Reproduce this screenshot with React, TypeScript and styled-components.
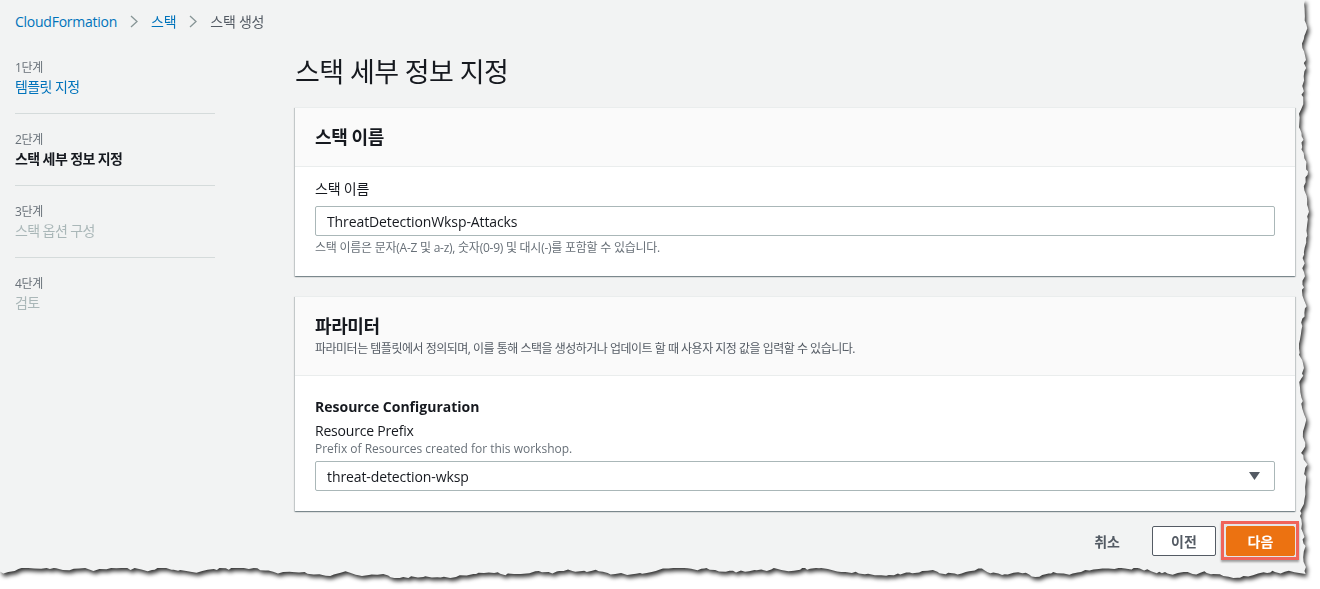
import React from 'react';
import styled, { createGlobalStyle } from 'styled-components';

const GlobalStyle = createGlobalStyle`
  html, body {
    margin: 0;
    padding: 0;
    background: #ffffff;
    overflow: hidden;
  }
  body {
    font-family: "Open Sans", "Noto Sans CJK KR", sans-serif;
    color: #16191f;
  }
`;

// small seeded random so the torn edge looks the same every render
const mulberry32 = (seed: number) => () => {
  seed |= 0;
  seed = (seed + 0x6d2b79f5) | 0;
  let t = Math.imul(seed ^ (seed >>> 15), 1 | seed);
  t = (t + Math.imul(t ^ (t >>> 7), 61 | t)) ^ t;
  return ((t ^ (t >>> 14)) >>> 0) / 4294967296;
};

const tornEdge = () => {
  const rand = mulberry32(11);
  const pts: string[] = ['0px 0px', '1305px 0px'];
  let y = 0;
  let x = 1304;
  while (y < 572) {
    y += 2 + rand() * 4;
    x += (rand() - 0.5) * 5;
    x = Math.max(1299, Math.min(1309, x));
    pts.push(`${x.toFixed(1)}px ${Math.min(y, 574).toFixed(1)}px`);
  }
  let bx = 1300;
  let by = 574;
  while (bx > 0) {
    bx -= 2 + rand() * 5;
    by += (rand() - 0.5) * 4;
    by = Math.max(568, Math.min(578, by));
    pts.push(`${Math.max(bx, 0).toFixed(1)}px ${by.toFixed(1)}px`);
  }
  pts.push('0px 574px');
  return `polygon(${pts.join(',')})`;
};

const TORN = tornEdge();

const Canvas = styled.div`
  width: 1320px;
  height: 589px;
  background: #ffffff;
  overflow: hidden;
`;

const Shadow = styled.div`
  filter: drop-shadow(2px 3px 2px rgba(0, 0, 0, 0.8));
`;

const Paper = styled.div`
  width: 1320px;
  height: 589px;
  background: #f2f3f3;
  box-sizing: border-box;
`;

const Breadcrumbs = styled.nav`
  height: 42px;
  padding-left: 15px;
  display: flex;
  align-items: center;
  gap: 13px;
  font-size: 14px;
  letter-spacing: -0.25px;
`;

const Crumb = styled.span<{ $link?: boolean }>`
  color: ${p => (p.$link ? '#0073bb' : '#545b64')};
`;

const Layout = styled.div`
  display: flex;
`;

const Sidebar = styled.ol`
  list-style: none;
  margin: 0 0 0 15px;
  padding: 0;
  width: 200px;
  flex-shrink: 0;
`;

const Step = styled.li`
  padding: 18px 0 15px;
  border-bottom: 1px solid #d5dbdb;

  &:last-child {
    border-bottom: none;
  }
`;

const StepLabel = styled.div`
  font-size: 12px;
  line-height: 16px;
  color: #687078;
  letter-spacing: -0.3px;
`;

const StepTitle = styled.div<{ $state: 'link' | 'active' | 'disabled' }>`
  font-size: 14px;
  line-height: 22px;
  letter-spacing: -0.6px;
  font-weight: ${p => (p.$state === 'active' ? 700 : 400)};
  color: ${p =>
    p.$state === 'link' ? '#0073bb' : p.$state === 'active' ? '#16191f' : '#aab7b8'};
`;

const Main = styled.main`
  margin-left: 80px;
  width: 1000px;
`;

const PageTitle = styled.h1`
  margin: 12px 0 17px;
  font-size: 27px;
  line-height: 36px;
  font-weight: 400;
  letter-spacing: -0.6px;
  color: #16191f;
`;

const Card = styled.section`
  background: #ffffff;
  box-shadow: 0 1px 1px 0 rgba(0, 28, 36, 0.3), 1px 1px 1px 0 rgba(0, 28, 36, 0.15),
    -1px 1px 1px 0 rgba(0, 28, 36, 0.15);
  border-top: 1px solid #eaeded;
  & + & {
    margin-top: 20px;
  }
`;

const CardHeader = styled.header`
  background: #fafafa;
  border-bottom: 1px solid #eaeded;
  padding: 18px 20px 18px;
`;

const CardTitle = styled.h2`
  margin: 0;
  font-size: 18px;
  line-height: 22px;
  font-weight: 700;
  letter-spacing: -0.4px;
  color: #16191f;
`;

const CardDescription = styled.p`
  margin: 4px 0 0;
  font-size: 12px;
  line-height: 16px;
  letter-spacing: -0.5px;
  color: #545b64;
`;

const CardBody = styled.div`
  padding: 12px 20px 20px;
`;

const GroupTitle = styled.h3`
  margin: 8px 0 3px;
  font-size: 14px;
  line-height: 22px;
  font-weight: 700;
`;

const FieldLabel = styled.label`
  display: block;
  font-size: 14px;
  line-height: 20px;
  letter-spacing: -0.2px;
  color: #16191f;
`;

const FieldDescription = styled.div`
  font-size: 12px;
  line-height: 16px;
  color: #687078;
`;

const FieldHint = styled.div`
  margin-top: 4px;
  font-size: 12px;
  line-height: 16px;
  letter-spacing: -0.25px;
  color: #687078;
`;

const Control = styled.div<{ $gap: number }>`
  margin-top: ${p => p.$gap}px;
  height: 30px;
  box-sizing: border-box;
  border: 1px solid #aab7b8;
  border-radius: 2px;
  background: #ffffff;
  display: flex;
  align-items: center;
  justify-content: space-between;
  padding: 0 14px 0 11px;
  font-size: 14px;
  letter-spacing: -0.1px;
  color: #16191f;
`;

const Footer = styled.div`
  display: flex;
  justify-content: flex-end;
  align-items: center;
  margin: 10px -4px 0 0;
`;

const LinkButton = styled.button`
  background: none;
  border: none;
  font-family: inherit;
  font-size: 14px;
  font-weight: 700;
  color: #545b64;
  padding: 4px 20px;
  margin-right: 12px;
`;

const NormalButton = styled.button`
  background: #ffffff;
  border: 1px solid #545b64;
  border-radius: 2px;
  font-family: inherit;
  font-size: 14px;
  font-weight: 700;
  color: #545b64;
  height: 30px;
  width: 64px;
  margin-right: 5px;
`;

const Highlight = styled.div`
  border: 3px solid #f0645a;
  padding: 2px 1px 1px 2px;
  background: #e6e6e6;
  box-shadow: 0 2px 2px rgba(0, 0, 0, 0.35);
`;

const PrimaryButton = styled.button`
  background: #ec7211;
  border: 1px solid #ec7211;
  border-radius: 2px;
  font-family: inherit;
  font-size: 14px;
  font-weight: 700;
  color: #ffffff;
  height: 30px;
  width: 69px;
  display: block;
`;

const Chevron = () => (
  <svg width="8" height="13" viewBox="0 0 8 13">
    <polyline points="1,1 7,6.5 1,12" fill="none" stroke="#879596" strokeWidth="1.3" />
  </svg>
);

const Caret = () => (
  <svg width="11" height="8" viewBox="0 0 11 8">
    <polygon points="0,0 11,0 5.5,8" fill="#545b64" />
  </svg>
);

const steps: { label: string; title: string; state: 'link' | 'active' | 'disabled' }[] = [
  { label: '1단계', title: '템플릿 지정', state: 'link' },
  { label: '2단계', title: '스택 세부 정보 지정', state: 'active' },
  { label: '3단계', title: '스택 옵션 구성', state: 'disabled' },
  { label: '4단계', title: '검토', state: 'disabled' },
];

const App: React.FC = () => {
  return (
    <Canvas>
      <GlobalStyle />
      <Shadow>
        <Paper style={{ clipPath: TORN }}>
          <Breadcrumbs>
            <Crumb $link>CloudFormation</Crumb>
            <Chevron />
            <Crumb $link>스택</Crumb>
            <Chevron />
            <Crumb>스택 생성</Crumb>
          </Breadcrumbs>
          <Layout>
            <Sidebar>
              {steps.map(step => (
                <Step key={step.label}>
                  <StepLabel>{step.label}</StepLabel>
                  <StepTitle $state={step.state}>{step.title}</StepTitle>
                </Step>
              ))}
            </Sidebar>
            <Main>
              <PageTitle>스택 세부 정보 지정</PageTitle>
              <Card>
                <CardHeader>
                  <CardTitle>스택 이름</CardTitle>
                </CardHeader>
                <CardBody>
                  <FieldLabel>스택 이름</FieldLabel>
                  <Control $gap={7}>ThreatDetectionWksp-Attacks</Control>
                  <FieldHint>
                    스택 이름은 문자(A-Z 및 a-z), 숫자(0-9) 및 대시(-)를 포함할 수 있습니다.
                  </FieldHint>
                </CardBody>
              </Card>
              <Card>
                <CardHeader>
                  <CardTitle>파라미터</CardTitle>
                  <CardDescription>
                    파라미터는 템플릿에서 정의되며, 이를 통해 스택을 생성하거나 업데이트 할 때 사용자 지정 값을 입력할 수 있습니다.
                  </CardDescription>
                </CardHeader>
                <CardBody>
                  <GroupTitle>Resource Configuration</GroupTitle>
                  <FieldLabel>Resource Prefix</FieldLabel>
                  <FieldDescription>Prefix of Resources created for this workshop.</FieldDescription>
                  <Control $gap={4}>
                    threat-detection-wksp
                    <Caret />
                  </Control>
                </CardBody>
              </Card>
              <Footer>
                <LinkButton>취소</LinkButton>
                <NormalButton>이전</NormalButton>
                <Highlight>
                  <PrimaryButton>다음</PrimaryButton>
                </Highlight>
              </Footer>
            </Main>
          </Layout>
        </Paper>
      </Shadow>
    </Canvas>
  );
};

export default App;
